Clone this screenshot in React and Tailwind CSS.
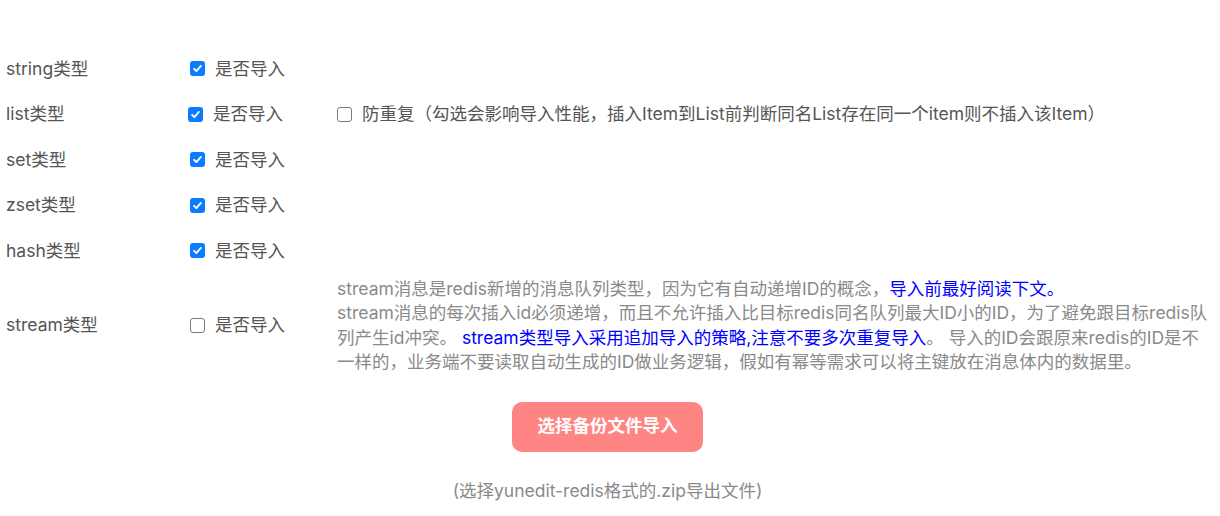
import React from 'react';

const font = { fontFamily: 'Inter, "Noto Sans CJK SC", sans-serif' };

const Check = ({ checked }) =>
  checked ? (
    <span className="flex h-[15px] w-[15px] shrink-0 items-center justify-center rounded-[3px] bg-[#0b7cff]">
      <svg viewBox="0 0 12 12" className="h-[11px] w-[11px]" fill="none">
        <path d="M2.3 6.3l2.5 2.5 4.9-5.6" stroke="#fff" strokeWidth="2" strokeLinecap="round" strokeLinejoin="round" />
      </svg>
    </span>
  ) : (
    <span className="h-[15px] w-[15px] shrink-0 rounded-[3px] border border-[#7a7a7a] bg-white" />
  );

const ImportCheck = ({ checked, offset }) => (
  <div className={`flex items-center gap-[10px] ${offset ? 'ml-[-2px]' : ''}`}>
    <Check checked={checked} />
    <span>是否导入</span>
  </div>
);

const rows = [
  { name: 'string类型', checked: true },
  { name: 'list类型', checked: true, offset: true, extra: true },
  { name: 'set类型', checked: true },
  { name: 'zset类型', checked: true },
  { name: 'hash类型', checked: true },
];

export default function App() {
  return (
    <div className="min-h-screen bg-white pt-[46px] text-[17.5px] text-[#555]" style={font}>
      {rows.map((row) => (
        <div key={row.name} className="flex h-[45.5px] items-center pl-[6px]">
          <div className="w-[184px]">{row.name}</div>
          <div className="w-[147px]">
            <ImportCheck checked={row.checked} offset={row.offset} />
          </div>
          {row.extra && (
            <div className="flex items-center gap-[10px]">
              <Check checked={false} />
              <span>防重复（勾选会影响导入性能，插入Item到List前判断同名List存在同一个item则不插入该Item）</span>
            </div>
          )}
        </div>
      ))}

      <div className="flex items-center py-[3px] pl-[6px]">
        <div className="w-[184px]">stream类型</div>
        <div className="w-[147px]">
          <ImportCheck checked={false} />
        </div>
        <p className="whitespace-nowrap leading-[24.5px] text-[#8a8a8a]">
          stream消息是redis新增的消息队列类型，因为它有自动递增ID的概念，
          <span className="text-[#0000ff]">导入前最好阅读下文。</span>
          <br />
          stream消息的每次插入id必须递增，而且不允许插入比目标redis同名队列最大ID小的ID，为了避免跟目标redis队
          <br />
          列产生id冲突。{' '}
          <span className="text-[#0000ff]">stream类型导入采用追加导入的策略,注意不要多次重复导入</span>
          。 导入的ID会跟原来redis的ID是不
          <br />
          一样的，业务端不要读取自动生成的ID做业务逻辑，假如有幂等需求可以将主键放在消息体内的数据里。
        </p>
      </div>

      <div className="mt-[24px] flex flex-col items-center pr-[5px]">
        <button className="h-[50px] w-[191px] rounded-[10px] bg-[#ff8585] text-[17.5px] font-bold text-white">
          选择备份文件导入
        </button>
        <div className="mt-[26px] text-[17.5px] text-[#8a8a8a]">(选择yunedit-redis格式的.zip导出文件)</div>
      </div>
    </div>
  );
}
